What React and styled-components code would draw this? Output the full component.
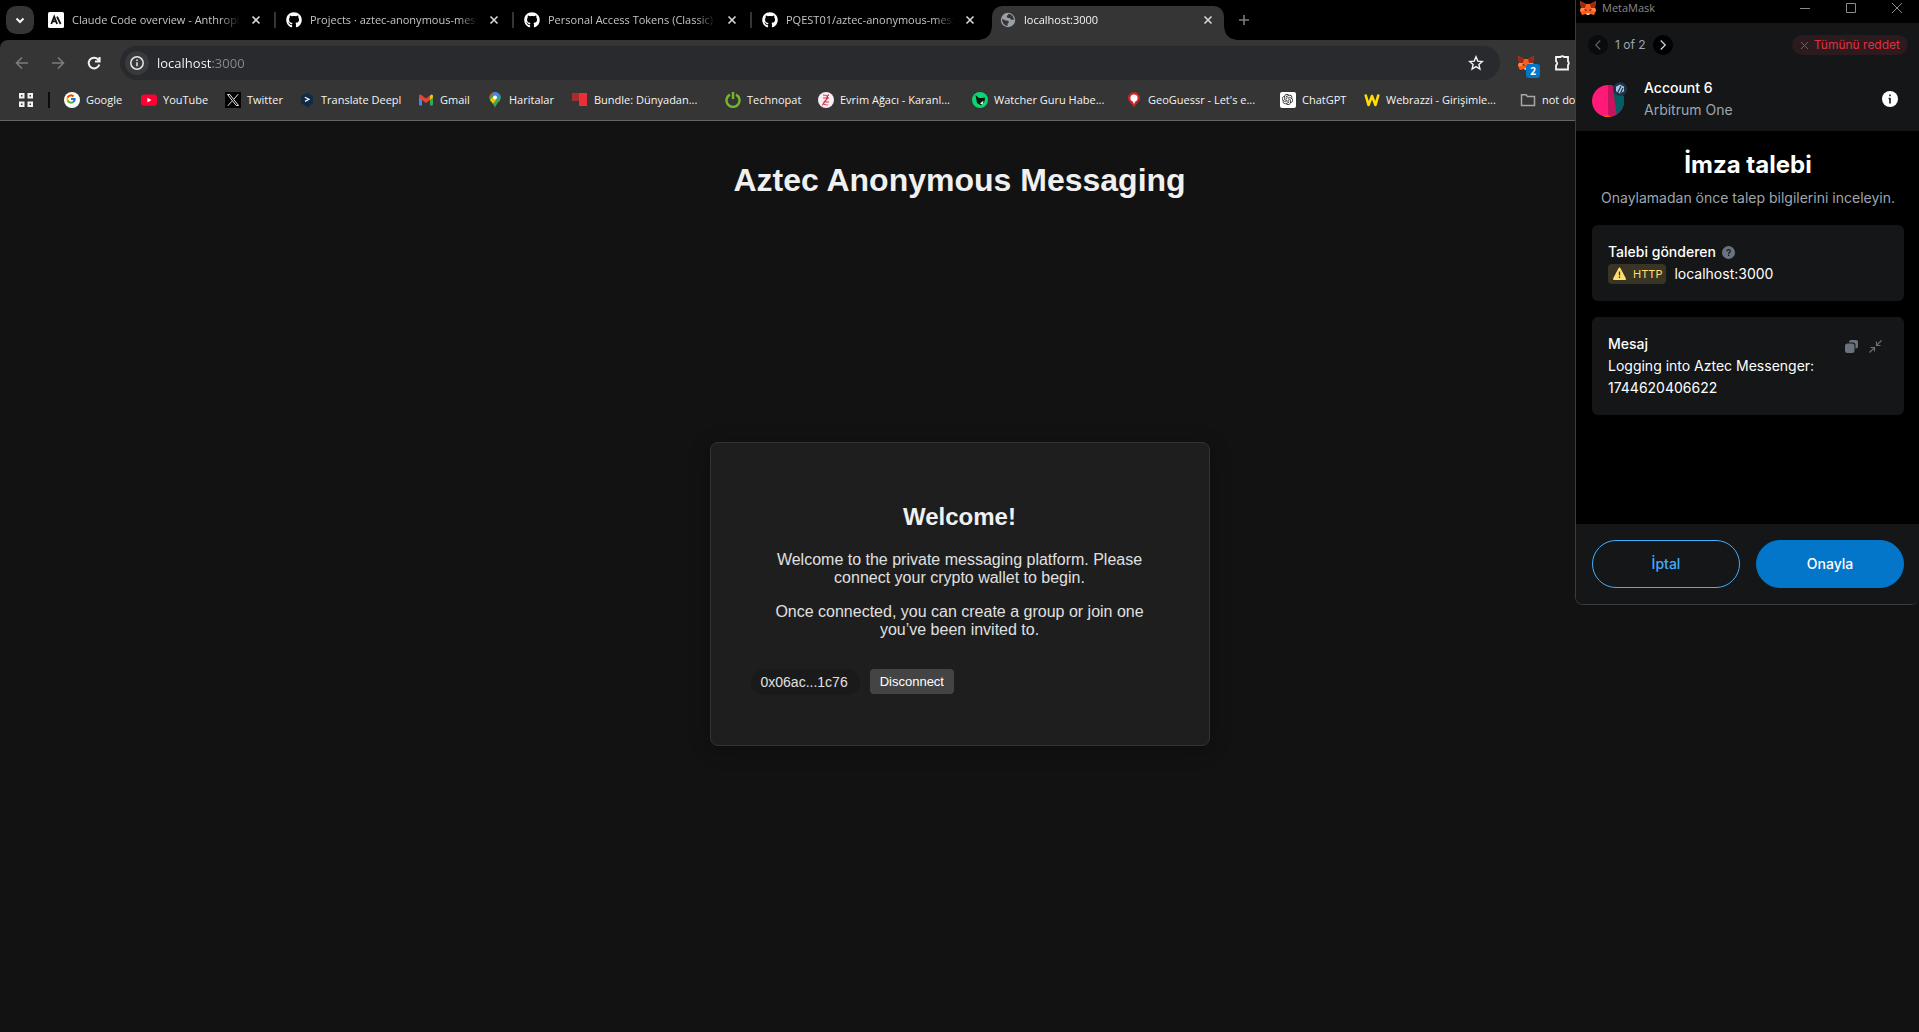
import React from "react";
import styled, { createGlobalStyle, css } from "styled-components";
import { FaGithub } from "react-icons/fa6";
import { FcGoogle } from "react-icons/fc";
import { SiOpenai } from "react-icons/si";

const chromeFont = '"Open Sans", "Noto Sans", sans-serif';
const pageFont = '"Liberation Sans", Arial, sans-serif';
const walletFont = 'Inter, "Open Sans", sans-serif';

const GlobalStyle = createGlobalStyle`
  *, *::before, *::after { box-sizing: border-box; }
  body { margin: 0; background: #121212; }
  button { font: inherit; border: 0; padding: 0; background: none; color: inherit; cursor: pointer; }
  svg { display: block; flex: none; }
`;

const Desktop = styled.div`
  position: relative;
  display: flex;
  flex-direction: column;
  min-height: 100vh;
  overflow: hidden;
  background: #121212;
`;

/* ---------- Browser frame ---------- */

const BrowserFrame = styled.header`
  background: #000;
  font: 11px/16px ${chromeFont};
  color: #f4f4f4;
`;

const TabStrip = styled.nav`
  display: flex;
  height: 40px;
  padding-left: 6px;
  overflow: hidden;
`;

const TabSearch = styled.button`
  display: grid;
  place-items: center;
  flex: none;
  width: 28px;
  height: 28px;
  margin: 6px 4px 0 0;
  border-radius: 10px;
  background: #353535;
`;

const flare = css`
  content: "";
  position: absolute;
  bottom: 0;
  width: 12px;
  height: 12px;
`;

const Tab = styled.div`
  position: relative;
  display: flex;
  align-items: center;
  flex: 0 1 238px;
  min-width: 0;
  height: 28px;
  margin-top: 6px;
  padding: 0 10px;
  border-right: 2px solid transparent;
  color: #c4c4c4;

  ${(p) =>
    !p.$last &&
    css`
      &::after {
        content: "";
        position: absolute;
        right: -2px;
        top: 6px;
        width: 2px;
        height: 16px;
        background: #353535;
      }
    `}

  ${(p) =>
    p.$active &&
    css`
      flex-basis: 232px;
      height: 34px;
      margin-left: 2px;
      padding: 0 8px 6px;
      border: 0;
      border-radius: 10px 10px 0 0;
      background: #353535;
      color: #f4f4f4;
      &::before {
        ${flare}
        left: -12px;
        background: radial-gradient(circle at 0 0, transparent 11px, #353535 12px);
      }
      &::after {
        ${flare}
        top: auto;
        height: 12px;
        width: 12px;
        right: -12px;
        background: radial-gradient(circle at 100% 0, transparent 11px, #353535 12px);
      }
    `}
`;

const TabTitle = styled.a`
  flex: 1;
  min-width: 0;
  margin: 0 8px;
  overflow: hidden;
  white-space: nowrap;
  color: inherit;
  text-decoration: none;
  mask-image: linear-gradient(to right, #000 calc(100% - 20px), transparent);
`;

const TabClose = styled.button`
  display: grid;
  place-items: center;
  width: 16px;
  height: 16px;
  color: #d8d8d8;
`;

const NewTab = styled.button`
  display: grid;
  place-items: center;
  width: 28px;
  height: 28px;
  margin: 6px 0 0 6px;
  color: #7c7c7c;
`;

const Toolbar = styled.div`
  display: flex;
  align-items: center;
  padding: 6px 0 0 4px;
  border-radius: 8px 0 0 0;
  background: #353535;
`;

const NavButton = styled.button`
  display: grid;
  place-items: center;
  width: 36px;
  height: 34px;
  color: ${(p) => (p.$dim ? "#7c7c7c" : "#f2f2f2")};
`;

const AddressBar = styled.form`
  display: flex;
  align-items: center;
  flex: 1;
  height: 34px;
  margin-left: 8px;
  padding: 0 16px 0 5px;
  border-radius: 17px;
  background: #282a2d;
`;

const SiteInfo = styled.button`
  display: grid;
  place-items: center;
  width: 24px;
  height: 24px;
  border-radius: 12px;
  background: #393a3c;
`;

const AddressInput = styled.input`
  flex: 1;
  min-width: 0;
  margin: 0 8px;
  padding: 0;
  border: 0;
  outline: 0;
  font: 13px/20px ${chromeFont};
  color: transparent;
  caret-color: #fff;
  background: linear-gradient(to right, #fff 55px, #8b8c8e 55px);
  background-clip: text;
`;

const Extensions = styled.div`
  display: flex;
  align-items: center;
  gap: 20px;
  flex: 0 0 419px;
  padding-left: 18px;
`;

const ExtensionButton = styled.button`
  position: relative;
  width: 16px;
`;

const Badge = styled.span`
  position: absolute;
  left: 8px;
  top: 9px;
  width: 14px;
  border-radius: 3px;
  background: #0376c9;
  color: #fff;
  font-size: 10px;
  line-height: 14px;
  font-weight: 700;
  text-align: center;
`;

const Bookmarks = styled.nav`
  display: flex;
  align-items: center;
  height: 41px;
  padding-left: 18px;
  overflow: hidden;
  border-bottom: 1px solid #666;
  background: #353535;
`;

const AppsButton = styled.button`
  width: 16px;
  margin-right: 14px;
`;

const Divider = styled.span`
  flex: none;
  width: 2px;
  height: 16px;
  margin-right: 14px;
  background: #0c0c0c;
`;

const Bookmark = styled.a`
  display: flex;
  align-items: center;
  gap: 6px;
  flex: 0 0 ${(p) => p.$width}px;
  white-space: nowrap;
  color: inherit;
  text-decoration: none;
`;

/* ---------- Web page ---------- */

const Page = styled.main`
  display: flex;
  flex: 1;
  flex-direction: column;
  align-items: center;
  padding: 41px 16px 43px;
  color: #e0e0e0;
  font: 16px/18px ${pageFont};
`;

const PageTitle = styled.h1`
  margin: 0;
  font-size: 32px;
  line-height: 37px;
  color: #f0f0f0;
`;

const CardArea = styled.div`
  display: flex;
  flex: 1;
  align-items: center;
  justify-content: center;
  width: 100%;
`;

const Card = styled.section`
  width: 100%;
  max-width: 500px;
  padding: 60px 40px 50px;
  border: 1px solid #333;
  border-radius: 8px;
  background: #1e1e1e;
  box-shadow: 0 4px 20px rgba(0, 0, 0, 0.3);
  text-align: center;

  h2 { margin: 0 0 20px; font-size: 24px; line-height: 28px; color: #f0f0f0; }
  p { margin: 0 0 16px; }
`;

const WalletRow = styled.div`
  display: flex;
  align-items: flex-start;
  gap: 10px;
  margin-top: 30px;
`;

const Address = styled.span`
  padding: 5px 12px 5px 10px;
  border-radius: 13px;
  background: #1a1a1a;
  font-size: 14px;
  line-height: 16px;
`;

const Disconnect = styled.button`
  && {
    padding: 5px 10px;
    border-radius: 4px;
    background: #444;
    color: #fff;
    font-size: 13px;
    line-height: 15px;
  }
`;

/* ---------- Wallet pop-up window ---------- */

const Popup = styled.aside`
  position: absolute;
  top: 0;
  right: 0;
  width: 344px;
  overflow: hidden;
  border: 1px solid #3c3c3c;
  border-width: 0 0 1px 1px;
  border-radius: 0 0 8px 8px;
  background: #000;
  color: #fff;
  font: 14px/22px ${walletFont};
`;

const TitleBar = styled.div`
  display: flex;
  align-items: center;
  height: 23px;
  padding: 0 16px 8px 4px;
  color: #8a8a8a;
  font: 11px/15px ${chromeFont};
`;

const WindowName = styled.span`
  flex: 1;
  margin-left: 6px;
`;

const WindowControls = styled.div`
  display: flex;
  gap: 34px;
`;

const AccountHeader = styled.div`
  padding: 12px 11px 10px 12px;
  background: #141618;
`;

const Pager = styled.div`
  display: flex;
  align-items: center;
  gap: 7px;
  height: 20px;
  margin-bottom: 22px;
  font-size: 12px;
  line-height: 20px;
  color: #9fa6ae;
`;

const PagerButton = styled.button`
  display: grid;
  place-items: center;
  width: 20px;
  height: 20px;
  border-radius: 10px;
  background: ${(p) => (p.$dim ? "#0a0b0c" : "#000")};
  color: ${(p) => (p.$dim ? "#5a6068" : "#d6d9dc")};
`;

const RejectAll = styled.button`
  display: flex;
  align-items: center;
  gap: 5px;
  height: 20px;
  margin-left: auto;
  padding: 0 8px;
  border-radius: 10px;
  background: #2b1a1e;
  color: #e0303f;
`;

const AccountRow = styled.div`
  display: flex;
  align-items: center;
  padding: 0 10px 0 4px;
`;

const AccountText = styled.div`
  flex: 1;
  margin-left: 16px;
  color: #9fa6ae;
  strong { display: block; color: #fff; font-weight: 500; }
`;

const RequestBody = styled.div`
  display: flex;
  flex-direction: column;
  gap: 16px;
  min-height: 393px;
  padding: 16px 15px 16px 16px;
`;

const RequestHead = styled.div`
  text-align: center;
  white-space: nowrap;
  color: #9fa6ae;
  h2 { margin: 0 0 6px; padding-top: 2px; font-size: 24px; line-height: 32px; font-weight: 700; color: #fff; }
`;

const InfoBox = styled.section`
  display: flex;
  justify-content: space-between;
  padding: 16px;
  border-radius: 6px;
  background: #141618;
  h3 { display: flex; align-items: center; gap: 6px; margin: 0; font-size: 14px; line-height: 22px; font-weight: 500; }
  p { margin: 0; }
`;

const Origin = styled.p`
  display: flex;
  align-items: center;
  gap: 8px;
`;

const HttpTag = styled.span`
  display: flex;
  align-items: center;
  gap: 6px;
  height: 20px;
  padding: 0 4px;
  border-radius: 4px;
  background: #3a3424;
  color: #ffdf70;
  font-size: 11px;
`;

const BoxTools = styled.div`
  display: flex;
  gap: 10px;
  padding: 6px 6px 0 0;
  color: #6a737d;
  button { height: 14px; }
`;

const PopupFooter = styled.footer`
  display: flex;
  gap: 16px;
  padding: 16px 15px 16px 16px;
  background: #141618;
`;

const PillButton = styled.button`
  && {
    flex: 1;
    height: 48px;
    border: 1px solid ${(p) => (p.$primary ? "#0376c9" : "#43aefc")};
    border-radius: 24px;
    background: ${(p) => (p.$primary ? "#0376c9" : "transparent")};
    color: ${(p) => (p.$primary ? "#fff" : "#43aefc")};
    font-weight: 500;
  }
`;

/* ---------- Drawings ---------- */

const Line = ({ d, size = 16, w = 2, box = 16, color = "currentColor" }) => (
  <svg width={size} height={size} viewBox={`0 0 ${box} ${box}`} fill="none" stroke={color} strokeWidth={w}>
    <path d={d} />
  </svg>
);

const Fox = () => (
  <svg width="16" height="16" viewBox="0 0 16 16">
    <path d="M0 1l6 3h4l6-3-1 6 1 4-2 4-4-1-1 1H7l-1-1-4 1-2-4 1-4z" fill="#ff5c16" />
    <path d="M0 1l6 3-1 4-4 0zM16 1l-6 3 1 4 4 0z" fill="#9c2a12" />
    <path d="M1 8l4 0-1 3-4 0zM15 8l-4 0 1 3 4 0z" fill="#ff8a4c" />
    <path d="M4 9l3 1-1 1zM12 9l-3 1 1 1z" fill="#2b1a35" />
    <path d="M6 13h4l-1 2H7z" fill="#d8c5bb" />
  </svg>
);

const Globe = () => (
  <svg width="16" height="16" viewBox="0 0 16 16">
    <circle cx="8" cy="8" r="7.2" fill="#9aa0a6" />
    <path d="M8.8 1.8L6.6 4.2l1 1.8h2.2l1 1.6 3.1.4A6 6 0 0 0 8.8 1.8zM2.2 6.8l3.4 1.8 2.6.2.8 1.6-1.4 1.2v2.3A6 6 0 0 1 2.2 6.8z" fill="#353535" />
  </svg>
);

const Anthropic = () => (
  <svg width="16" height="16" viewBox="0 0 16 16">
    <rect width="16" height="16" rx="1.5" fill="#fff" />
    <path d="M3.3 12l2.9-7.4L9.1 12M4.4 9.4H8M9 4.6l3.6 7.4" fill="none" stroke="#111" strokeWidth="1.8" />
  </svg>
);

const icons = {
  google: (
    <svg width="16" height="16" viewBox="0 0 16 16">
      <circle cx="8" cy="8" r="8" fill="#fff" />
      <FcGoogle x="1.5" y="1.5" width="13" height="13" />
    </svg>
  ),
  youtube: (
    <svg width="16" height="16" viewBox="0 0 16 16">
      <rect y="2.4" width="16" height="11.4" rx="3" fill="#ff0033" />
      <path d="M6.4 5.7v4.8L10.4 8.1z" fill="#fff" />
    </svg>
  ),
  twitter: (
    <svg width="16" height="16" viewBox="0 0 16 16">
      <rect width="16" height="16" fill="#000" />
      <path d="M2.500 2.500h2.300L13.500 13.500h-2.300zM13.200 2.200L9 7M7 9.200L2.800 13.800" fill="none" stroke="#e8e8e8" />
    </svg>
  ),
  deepl: (
    <svg width="16" height="16" viewBox="0 0 16 16">
      <path d="M8 .8l6 3.4v7.2L10 13.8v2L7 14 2 11.400V4.200z" fill="#0f2b46" />
      <path d="M5.8 5.200L10 7.300 6 9.400" fill="none" stroke="#fff" strokeWidth="1.200" />
    </svg>
  ),
  gmail: (
    <svg width="16" height="16" viewBox="0 0 16 16">
      <path d="M1 4l3 2.300V13.500H2a1 1 0 0 1-1-1z" fill="#4285f4" />
      <path d="M15 4l-3 2.300V13.500h2a1 1 0 0 0 1-1z" fill="#34a853" />
      <path d="M12 3.500l1-.7a1.300 1.300 0 0 1 2 1.100V5.600L12 8z" fill="#fbbc04" />
      <path d="M1 4a1.300 1.300 0 0 1 2-1.200L8 6.600l4-3.100V8L8 11 1 5.800z" fill="#ea4335" />
    </svg>
  ),
  maps: (
    <svg width="16" height="16" viewBox="0 0 16 16">
      <clipPath id="pin"><path d="M8 0a5.600 5.600 0 0 1 5.600 5.600C13.600 9.700 9 11 8 16 7 11 2.400 9.700 2.400 5.600A5.600 5.600 0 0 1 8 0z" /></clipPath>
      <g clipPath="url(#pin)">
        <rect width="16" height="16" fill="#34a853" />
        <path d="M0 8L8 0H0z" fill="#ea4335" />
        <path d="M6 0h8v5L8 6z" fill="#4285f4" />
        <path d="M2 9l4-4 4 4-5 4z" fill="#fbbc04" />
        <path d="M14 2l-9 11 9 3z" fill="#34a853" />
      </g>
      <circle cx="8" cy="5.600" r="2" fill="#fff" />
    </svg>
  ),
  bundle: (
    <svg width="16" height="16" viewBox="0 0 16 16">
      <rect y="1" width="15" height="8" fill="#a32d33" />
      <rect x="7" y="1" width="8" height="13" fill="#ea2f36" />
    </svg>
  ),
  technopat: (
    <svg width="16" height="16" viewBox="0 0 16 16" fill="none" stroke="#76b82a" strokeWidth="2.400">
      <path d="M5 2.600a6.500 6.500 0 1 0 6 0M8 0v7" />
    </svg>
  ),
  evrim: (
    <svg width="16" height="16" viewBox="0 0 16 16">
      <circle cx="8" cy="8" r="8" fill="#f6eef0" />
      <path d="M5 3c5 0 6 3 3 5s-4 5 2 5M11 2.500C7 5 10 7 7.500 9S5 12 4.500 13.500M5 6h6M6 10h5" fill="none" stroke="#d8344f" strokeWidth="1.100" />
    </svg>
  ),
  watcher: (
    <svg width="16" height="16" viewBox="0 0 16 16">
      <circle cx="8" cy="8" r="8" fill="#0bd66f" />
      <path d="M3.500 3l3.500 3h3l3-.5-.5 4L9 13.500 5 11z" fill="#06170f" />
      <path d="M8 11.500l3.500-3-1 4z" fill="#fff" />
    </svg>
  ),
  geo: (
    <svg width="16" height="16" viewBox="0 0 16 16">
      <path d="M8 0a6 6 0 0 1 6 6c0 4-5 6-6 10C7 12 2 10 2 6a6 6 0 0 1 6-6z" fill="#c8252c" />
      <circle cx="8" cy="6" r="3.600" fill="#fff" />
      <path d="M6 8l2 4 2-4z" fill="#fff" />
    </svg>
  ),
  chatgpt: (
    <svg width="16" height="16" viewBox="0 0 16 16">
      <rect width="16" height="16" rx="2" fill="#fff" />
      <SiOpenai x="2" y="2" width="12" height="12" color="#222" />
    </svg>
  ),
  webrazzi: (
    <svg width="16" height="16" viewBox="0 0 16 16">
      <path d="M1.500 2.500L4.500 13 8 4l3.500 9 3-10.500" fill="none" stroke="#ffdd00" strokeWidth="2.600" strokeLinejoin="round" />
    </svg>
  ),
  folder: <Line w={1.500} color="#a8a8a8" d="M1.500 2.700h4.500l1.500 1.800h7v9h-13z" />,
};

const bookmarks = [
  ["google", "Google", 77],
  ["youtube", "YouTube", 84],
  ["twitter", "Twitter", 74],
  ["deepl", "Translate Deepl", 119],
  ["gmail", "Gmail", 69],
  ["maps", "Haritalar", 85],
  ["bundle", "Bundle: Dünyadan...", 153],
  ["technopat", "Technopat", 93],
  ["evrim", "Evrim Ağacı - Karanl...", 154],
  ["watcher", "Watcher Guru Habe...", 154],
  ["geo", "GeoGuessr - Let's e...", 154],
  ["chatgpt", "ChatGPT", 84],
  ["webrazzi", "Webrazzi - Girişimle...", 156],
  ["folder", "not do", 80],
];

const github = <FaGithub size={16} color="#fff" />;
const tabs = [
  { icon: <Anthropic />, title: "Claude Code overview - Anthropic" },
  { icon: github, title: "Projects · aztec-anonymous-messaging" },
  { icon: github, title: "Personal Access Tokens (Classic)" },
  { icon: github, title: "PQEST01/aztec-anonymous-messaging", last: true },
  { icon: <Globe />, title: "localhost:3000", active: true },
];

const cross = "M4.500 4.500l7 7M11.500 4.500l-7 7";

function Browser() {
  return (
    <BrowserFrame>
      <TabStrip aria-label="Tabs">
        <TabSearch aria-label="Search tabs"><Line d="M4.500 6.500L8 10l3.500-3.500" /></TabSearch>
        {tabs.map((t) => (
          <Tab key={t.title} $active={t.active} $last={t.last}>
            {t.icon}
            <TabTitle href="#">{t.title}</TabTitle>
            <TabClose aria-label="Close tab"><Line w={1.6} d={cross} /></TabClose>
          </Tab>
        ))}
        <NewTab aria-label="New tab"><Line w={1.6} d="M8 3v10M3 8h10" /></NewTab>
      </TabStrip>
      <Toolbar>
        <NavButton $dim aria-label="Back"><Line w={1.6} d="M14 8H3M8 2.500L2.500 8 8 13.500" /></NavButton>
        <NavButton $dim aria-label="Forward"><Line w={1.6} d="M2 8h11M8 2.500L13.500 8 8 13.500" /></NavButton>
        <NavButton aria-label="Reload"><Line d="M13.300 9.500A5.400 5.400 0 1 1 12 4.300L13.500 6M13.600 2v4.600H9" /></NavButton>
        <AddressBar>
          <SiteInfo type="button" aria-label="Site information">
            <svg width="16" height="16" viewBox="0 0 16 16" fill="none" stroke="#e8e8e8" strokeWidth="1.500">
              <circle cx="8" cy="8" r="6.200" />
              <path d="M8 7.200v4M8 4.500v1.600" />
            </svg>
          </SiteInfo>
          <AddressInput aria-label="Address" defaultValue="localhost:3000" spellCheck={false} />
          <button type="button" aria-label="Bookmark this page">
            <Line w={1.400} d="M8 1.800l1.800 4.300 4.500.4-3.400 3 1 4.500L8 11.600 4.100 14l1-4.500-3.400-3 4.500-.4z" />
          </button>
        </AddressBar>
        <Extensions>
          <ExtensionButton aria-label="MetaMask"><Fox /><Badge>2</Badge></ExtensionButton>
          <ExtensionButton aria-label="Extensions">
            <Line w={1.800} size={18} box={18} d="M2 3h4.500a2 1.600 0 0 1 3.500 0H14v4.500a1.600 2 0 0 1 0 3.500V15.500H2v-4.200a2.300 2.300 0 0 0 0-4z" />
          </ExtensionButton>
        </Extensions>
      </Toolbar>
      <Bookmarks aria-label="Bookmarks">
        <AppsButton aria-label="Apps">
          <Line d="M2 2h3.500v3.500H2zM10.500 2H14v3.500h-3.500zM2 10.500h3.500V14H2zM10.500 10.500H14V14h-3.500z" />
        </AppsButton>
        <Divider />
        {bookmarks.map(([icon, label, width]) => (
          <Bookmark key={icon} href="#" $width={width}>{icons[icon]}{label}</Bookmark>
        ))}
      </Bookmarks>
    </BrowserFrame>
  );
}

function Wallet() {
  return (
    <Popup aria-label="MetaMask">
      <TitleBar>
        <Fox />
        <WindowName>MetaMask</WindowName>
        <WindowControls>
          <button aria-label="Minimize"><Line size={12} box={12} w={1} d="M1 6.500h10" /></button>
          <button aria-label="Maximize"><Line size={12} box={12} w={1} d="M1.500 1.500h9v9h-9z" /></button>
          <button aria-label="Close"><Line size={12} box={12} w={1} d="M1 1l10 10M11 1L1 11" /></button>
        </WindowControls>
      </TitleBar>
      <AccountHeader>
        <Pager>
          <PagerButton $dim aria-label="Previous"><Line size={12} w={1.600} d="M11 2L5 8l6 6" /></PagerButton>
          1 of 2
          <PagerButton aria-label="Next"><Line size={12} w={1.600} d="M5 2l6 6-6 6" /></PagerButton>
          <RejectAll><Line size={9} box={9} w={1} d="M1 1l7 7M8 1L1 8" />Tümünü reddet</RejectAll>
        </Pager>
        <AccountRow>
          <svg width="36" height="36" viewBox="0 0 36 36">
            <clipPath id="avatar"><circle cx="16" cy="20" r="16" /></clipPath>
            <g clipPath="url(#avatar)">
              <rect width="36" height="36" fill="#ff1a79" />
              <path d="M16 0h20v36H16z" fill="#c8145f" />
              <path d="M20 0h16v36H25z" fill="#035e63" />
              <path d="M11 36l2-1.500h5l-1 1.500z" fill="#f06a00" />
            </g>
            <circle cx="28" cy="8" r="7" fill="#213147" />
            <path d="M28 3.500l4 2.300v4.500l-4 2.200-4-2.200V5.800z" fill="#9dcced" />
            <path d="M26 11l3-6M28.500 12l2.500-5" stroke="#213147" strokeWidth="1.200" />
          </svg>
          <AccountText><strong>Account 6</strong>Arbitrum One</AccountText>
          <button aria-label="Account details">
            <svg width="16" height="16" viewBox="0 0 16 16">
              <circle cx="8" cy="8" r="8" fill="#fff" />
              <path d="M8 7v5.500M8 3.500v1.800M6.600 7.500H8" stroke="#141618" strokeWidth="1.600" />
            </svg>
          </button>
        </AccountRow>
      </AccountHeader>
      <RequestBody>
        <RequestHead>
          <h2>İmza talebi</h2>
          Onaylamadan önce talep bilgilerini inceleyin.
        </RequestHead>
        <InfoBox>
          <div>
            <h3>
              Talebi gönderen
              <svg width="13" height="13" viewBox="0 0 13 13">
                <circle cx="6.500" cy="6.500" r="6.500" fill="#6a737d" />
                <path d="M4.900 5.200c0-2.200 3.400-2 3.400 0 0 1.300-1.700 1.200-1.700 2.500M6.600 8.600v1.300" fill="none" stroke="#141618" strokeWidth="1.200" />
              </svg>
            </h3>
            <Origin>
              <HttpTag>
                <svg width="15" height="14" viewBox="0 0 15 14">
                  <path d="M7.500 1.500L13 12H2z" fill="#ffdf70" stroke="#ffdf70" strokeWidth="2" strokeLinejoin="round" />
                  <path d="M7.500 4.500v4M7.500 9.600v1.500" stroke="#3a3424" strokeWidth="1.300" />
                </svg>
                HTTP
              </HttpTag>
              localhost:3000
            </Origin>
          </div>
        </InfoBox>
        <InfoBox>
          <div>
            <h3>Mesaj</h3>
            <p>Logging into Aztec Messenger:<br />1744620406622</p>
          </div>
          <BoxTools>
            <button aria-label="Copy">
              <svg width="15" height="15" viewBox="0 0 15 15" fill="currentColor">
                <path d="M5 3a2 2 0 0 1 2-2h5a2 2 0 0 1 2 2v4.500a2 2 0 0 1-2 2h-.5V6.500a3 3 0 0 0-3-3H5z" />
                <rect x="1" y="4.500" width="9.500" height="9.500" rx="2.500" />
              </svg>
            </button>
            <button aria-label="Collapse">
              <Line size={13} box={13} w={1.200} d="M12.500.5L7.800 5.200M7.500 1.500v4h4M.5 12.500l4.700-4.700M1.500 7.500h4v4" />
            </button>
          </BoxTools>
        </InfoBox>
      </RequestBody>
      <PopupFooter>
        <PillButton>İptal</PillButton>
        <PillButton $primary>Onayla</PillButton>
      </PopupFooter>
    </Popup>
  );
}

export default function App() {
  return (
    <Desktop>
      <GlobalStyle />
      <Browser />
      <Page>
        <PageTitle>Aztec Anonymous Messaging</PageTitle>
        <CardArea>
          <Card>
            <h2>Welcome!</h2>
            <p>Welcome to the private messaging platform. Please connect your crypto wallet to begin.</p>
            <p>Once connected, you can create a group or join one you’ve been invited to.</p>
            <WalletRow>
              <Address>0x06ac...1c76</Address>
              <Disconnect>Disconnect</Disconnect>
            </WalletRow>
          </Card>
        </CardArea>
      </Page>
      <Wallet />
    </Desktop>
  );
}
